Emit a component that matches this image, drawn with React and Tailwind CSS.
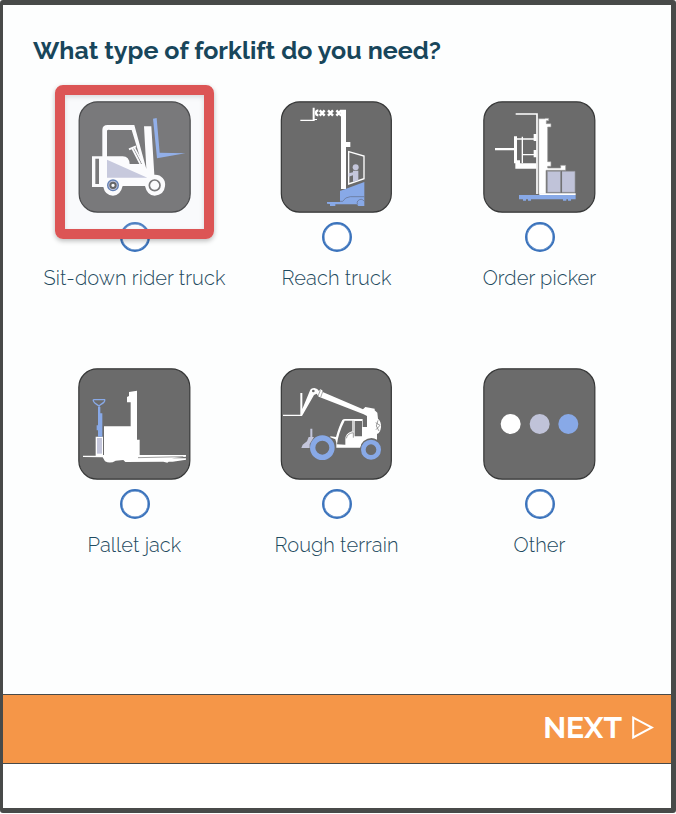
import React from "react";

function Tile({ x, y, inset, width, children }) {
  return (
    <svg viewBox={`${x} ${y} 342 336`} className="h-[112px] w-[114px] shrink-0">
      <rect x={x + inset + 1.5} y={y + 2.5} width={width - 3} height="331" rx="55" fill="#6b6b6b" stroke="#363737" strokeWidth="3.6" />
      {children}
    </svg>
  );
}

function SitDown() {
  return (
    <Tile x={84} y={63} inset={2} width={336}>
      <path fillRule="evenodd" fill="#fff" d="M126 229H157V150Q157 135 173 135H253L289 267L282 139H304L313 284Q329 283 338 294Q347 303 345 319Q342 346 314 347Q291 346 285 318H218Q211 347 189 347Q165 346 160 321H126ZM136 236V312H147V236ZM171 148V229H218Q238 230 239 252H276L245 150H181Q171 148 171 153Z" />
      <path fill="#c4c6db" d="M171 239L292 293H171Z" />
      <path d="M237 208L258 199" fill="none" stroke="#fff" strokeWidth="6" />
      <path d="M246 204L271 252M253 203L278 250" fill="none" stroke="#fff" strokeWidth="5" />
      <circle cx="189" cy="316" r="16" fill="#b8bdd5" stroke="#5374ad" strokeWidth="4" />
      <circle cx="189" cy="316" r="8" fill="#fff" stroke="#555" strokeWidth="6" />
      <circle cx="314" cy="316" r="16" fill="#fff" stroke="#6b6b6b" strokeWidth="5" />
      <path fill="#88a9e7" d="M309 116L320 114L329 218L406 220L321 235Z" />
    </Tile>
  );
}

function Reach() {
  return (
    <Tile x={30} y={33} inset={2.5} width={333}>
      <path fill="#fff" d="M213 59H228V156H241V171H228V297H213ZM128 53H134V87H141V90H134V93H91V89H128Z" />
      <path d="M145 61Q137 62 138 69Q138 75 145 76M149 61L164 77M164 61L149 77M174 61L189 77M189 61L174 77M199 61L214 77M214 61L199 77" stroke="#fff" strokeWidth="7" fill="none" />
      <path d="M236 185L282 198V266L236 282Z" fill="none" stroke="#fff" strokeWidth="4" />
      <circle cx="257" cy="232" r="9" fill="#c4c6db" />
      <path fill="#c4c6db" d="M236 250L249 247V242H265V271L249 276V256L236 260Z" />
      <path fill="#88a9e7" d="M210 303L283 276V348H265L260 343H196V348H180V342L171 341V336H210Z" />
      <path d="M210 334H218Q225 321 241 320H283M263 333A11 11 0 0 0 263 344M263 333Q274 322 283 334" fill="none" stroke="#626d86" strokeWidth="2" />
    </Tile>
  );
}

function OrderPicker() {
  return (
    <Tile x={33} y={33} inset={1} width={336}>
      <path d="M131 72H195V312" fill="none" stroke="#fff" strokeWidth="5" />
      <path fill="#fff" stroke="#989898" strokeWidth="2" d="M200 86H219V85H230V92H223V101H237V111H227V215H237V229H227V234H266V226H281V241H222V312H200Z" />
      <path fill="#fff" d="M69 174H126V139H135V211H144V220H193V236H130V220H126V181H69ZM185 132H194V153H185ZM185 180H194V202H185Z" />
      <path d="M135 147H190M151 140V219M151 194H190" fill="none" stroke="#fff" strokeWidth="4" />
      <path fill="#c0c3d9" stroke="#96979f" strokeWidth="2" d="M226 244H266V307H226ZM269 244H309V307H269Z" />
      <path stroke="#6b6b6b" strokeWidth="3" d="M268 243V308" />
      <path fill="#fff" d="M202 310H311V315H202Z" />
      <path fill="#88a9e7" d="M141 315H311V328H297V332H288V328H283V332H273V328H177V332H168V328H162V332H153V328H141Z" />
    </Tile>
  );
}

function PalletJack() {
  return (
    <Tile x={24} y={24} inset={1} width={336}>
      <path fill="#fff" d="M102 199H182V127H171V111L177 108V96L201 92V239H209V285H348V290L305 295H348V299L308 305L296 305L292 308L280 305L166 306L160 300L137 302Q121 312 105 304L98 292L39 291V287H77V230H99V285H102Z" />
      <path stroke="#6b6b6b" strokeWidth="2" d="M204 293L340 290" />
      <path fill="#c4c6db" d="M81 234H96V281H81Z" />
      <path fill="#88a9e7" d="M84 141H91V160H97V230H84V211H80V196H84Z" />
      <path d="M70 119H104Q106 126 93 133L87 138L80 133Q68 125 70 119M87 137V164" fill="none" stroke="#88a9e7" strokeWidth="4" />
    </Tile>
  );
}

function RoughTerrain() {
  return (
    <Tile x={30} y={24} inset={2.5} width={333}>
      <path fill="#fff" d="M39 164H91V99H97V147L119 94Q122 84 133 84Q143 85 147 93L151 88L157 91L158 96L279 148L286 141L314 146V151L322 158L324 176Q334 184 333 202Q331 219 321 222V239Q302 227 281 243Q272 251 271 263H199V249L196 238L181 232V229L198 231Q207 198 217 180Q220 176 228 177H278V201H291V168L281 163L146 110L140 101L132 105L96 168H39Z" />
      <path fill="#6b6b6b" d="M224 182H246V214Q226 219 226 239V254L201 253Q205 219 224 182ZM254 183H276V229H254Z" />
      <path d="M249 182V215M229 235Q232 220 250 218V233M324 181L319 198L327 213M317 188L330 196L318 209" fill="none" stroke="#6b6b6b" strokeWidth="2" />
      <circle cx="130" cy="93" r="4" fill="#6b6b6b" />
      <path d="M151 91L144 108M158 95L152 112" stroke="#777" strokeWidth="2" />
      <path fill="#c4c6db" d="M121 206H127V231H132L119 252V264H94L98 254L111 244L116 231H121Z" />
      <circle cx="157" cy="263" r="29" fill="#6b6b6b" stroke="#88a9e7" strokeWidth="16" />
      <circle cx="303" cy="269" r="32" fill="#6b6b6b" />
      <circle cx="303" cy="269" r="23" fill="#6b6b6b" stroke="#88a9e7" strokeWidth="14" />
    </Tile>
  );
}

function Other() {
  return (
    <Tile x={33} y={24} inset={1} width={336}>
      <circle cx="116" cy="192" r="30" fill="#fff" />
      <circle cx="203" cy="192" r="30" fill="#c0c3d9" />
      <circle cx="289" cy="192" r="30" fill="#88a9e7" />
    </Tile>
  );
}

const options = [
  { label: "Sit-down rider truck", Icon: SitDown },
  { label: "Reach truck", Icon: Reach },
  { label: "Order picker", Icon: OrderPicker },
  { label: "Pallet jack", Icon: PalletJack },
  { label: "Rough terrain", Icon: RoughTerrain },
  { label: "Other", Icon: Other },
];

export default function App() {
  return (
    <div className="h-[814px] w-[676px] bg-white font-['Raleway',Lato,sans-serif]">
      <main className="flex h-[813px] flex-col rounded-[3px] border-y-[5px] border-r-[5px] border-l-[3px] border-[#484a49] bg-[#fdfefe]">
        <section className="h-[689px] pl-[30px] pt-[28px]">
          <h1 className="h-[34px] text-[25px] leading-[34px] font-bold whitespace-nowrap text-[#18465b]">
            What type of forklift do you need?
          </h1>
          <div className="mt-[34px] grid auto-rows-[267px] grid-cols-[204px_200px_206px]">
            {options.map(({ label, Icon }, index) => (
              <label key={label} className="relative flex flex-col items-center">
                <Icon />
                <input type="radio" name="forklift" className="mt-[9px] size-[30px] shrink-0 appearance-none rounded-full border-2 border-[#3b73bc] bg-white shadow-[inset_0_0_0_0.5px_#3b73bc]" />
                <span className="mt-[11px] pr-px text-[20px] leading-[30px] font-[350] tracking-[0.08px] whitespace-nowrap text-[#1f4b60]">{label}</span>
                {index === 0 && (
                  <span className="absolute -top-4 left-[22px] h-[154px] w-[159px] rounded-[8px] border-[10px] border-[#dc5555] bg-[#dbdfee]/12 shadow-[0_2px_5px_#0004,inset_0_2px_5px_#0002]" />
                )}
              </label>
            ))}
          </div>
        </section>
        <footer className="flex h-[70px] items-center justify-end border-y border-[#484a49] bg-[#f59648] pr-[17px] pb-[3px]">
          <button className="flex items-center gap-[10px] text-[30px] leading-none font-bold text-white">
            <span>NEXT</span>
            <svg viewBox="0 0 22 23" className="h-[23px] w-[22px]">
              <path d="M1.2 1.7V21.5L20 11.5Z" fill="none" stroke="#fff" strokeWidth="2" />
            </svg>
          </button>
        </footer>
        <div className="flex-1 bg-white" />
      </main>
    </div>
  );
}
